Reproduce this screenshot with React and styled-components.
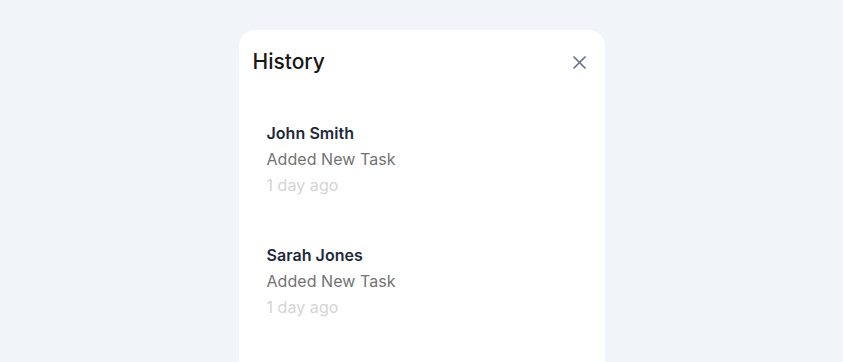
import React from "react";
import styled, { createGlobalStyle } from "styled-components";

const GlobalStyle = createGlobalStyle`
  html, body {
    margin: 0;
    padding: 0;
    background: #f1f5f9;
    font-family: Inter, "Noto Sans", sans-serif;
  }
`;

const Page = styled.div`
  display: flex;
  justify-content: center;
  padding-top: 30px;
  height: 332px;
  overflow: hidden;
`;

const Panel = styled.div`
  width: 366px;
  min-height: 400px;
  background: #fff;
  border-radius: 16px 16px 0 0;
`;

const Header = styled.div`
  display: flex;
  align-items: center;
  justify-content: space-between;
  padding: 18px 13px 22px 14px;
`;

const Title = styled.h2`
  margin: 0;
  font-size: 21px;
  line-height: 28px;
  font-weight: 500;
  color: #171717;
`;

const CloseButton = styled.button`
  display: flex;
  align-items: center;
  justify-content: center;
  width: 24px;
  height: 24px;
  padding: 0;
  border: none;
  background: none;
  color: #64748b;
  cursor: pointer;
`;

const List = styled.ul`
  list-style: none;
  margin: 0;
  padding: 0 14px;
`;

const Item = styled.li`
  padding: 22px 14px;
  font-size: 16px;
  line-height: 26px;
  letter-spacing: 0.05px;
`;

const Name = styled.div`
  font-weight: 600;
  color: #1e293b;
`;

const Action = styled.div`
  color: #737373;
`;

const Time = styled.div`
  color: #d4d4d4;
`;

const entries = [
  { name: "John Smith", action: "Added New Task", time: "1 day ago" },
  { name: "Sarah Jones", action: "Added New Task", time: "1 day ago" },
];

const App = () => (
  <>
    <GlobalStyle />
    <Page>
      <Panel>
        <Header>
          <Title>History</Title>
          <CloseButton aria-label="Close">
            <svg width="13" height="13" viewBox="0 0 13 13" fill="none">
              <path d="M1 1l11 11M12 1L1 12" stroke="currentColor" strokeWidth="1.7" strokeLinecap="round" />
            </svg>
          </CloseButton>
        </Header>
        <List>
          {entries.map((e, i) => (
            <Item key={i}>
              <Name>{e.name}</Name>
              <Action>{e.action}</Action>
              <Time>{e.time}</Time>
            </Item>
          ))}
        </List>
      </Panel>
    </Page>
  </>
);

export default App;
